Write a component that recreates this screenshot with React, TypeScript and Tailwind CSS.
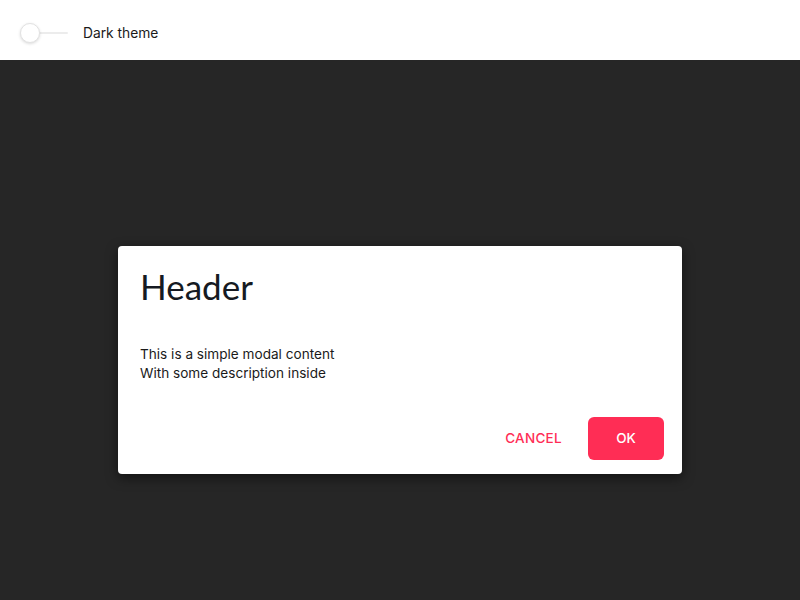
import React from 'react';

export default function App() {
  return (
    <div className="w-[800px] h-[600px] overflow-hidden flex flex-col font-['Inter',sans-serif]">
      <div className="h-[60px] bg-white flex items-center px-5 pt-[6px] shrink-0">
        <div className="relative w-[48px] h-[20px] flex items-center">
          <div className="absolute left-[2px] right-0 h-[2px] bg-[#ececec] rounded-full" />
          <div className="absolute left-0 w-[20px] h-[20px] rounded-full bg-white border border-[#e2e2e2] shadow-[0_1px_3px_rgba(0,0,0,0.15)]" />
        </div>
        <span className="ml-[15px] text-[13.8px] text-[#1a1a1a]">Dark theme</span>
      </div>
      <div className="h-[600px] shrink-0 bg-[#262626] flex items-center justify-center">
        <div className="w-[564px] h-[228px] bg-white rounded-[4px] shadow-[0_4px_12px_rgba(0,0,0,0.5)] flex flex-col pl-[22px] pr-[18px] pt-[20px] pb-[14px]">
          <h1 className="font-['Lato',sans-serif] text-[35px] leading-[40px] text-[#151a22]">Header</h1>
          <div className="mt-[39px] text-[13.6px] leading-[19px] text-[#1a1a1a]">
            <p>This is a simple modal content</p>
            <p>With some description inside</p>
          </div>
          <div className="mt-auto flex justify-end items-center gap-[26px]">
            <button className="text-[13.5px] font-medium text-[#ff2d55] tracking-[0.3px]">CANCEL</button>
            <button className="w-[76px] h-[43px] rounded-[6px] bg-[#ff2d55] text-white text-[13.5px] font-medium">OK</button>
          </div>
        </div>
      </div>
    </div>
  );
}
